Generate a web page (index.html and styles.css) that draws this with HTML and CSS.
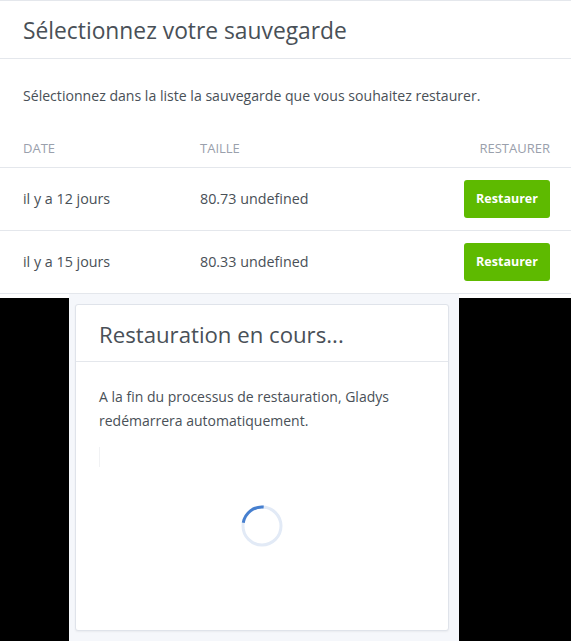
FILE: index.html
```html
<!DOCTYPE html>
<html lang="fr">
<head>
<meta charset="utf-8">
<title>Restauration</title>
<link rel="stylesheet" href="styles.css">
</head>
<body>
<div class="page">
  <section class="card top-card">
    <div class="card-header">
      <h3 class="card-title title-main">Sélectionnez votre sauvegarde</h3>
    </div>
    <div class="card-body">
      <p class="lead-text">Sélectionnez dans la liste la sauvegarde que vous souhaitez restaurer.</p>
    </div>
    <table class="backup-table">
      <colgroup>
        <col class="col-date">
        <col class="col-size">
        <col class="col-action">
      </colgroup>
      <thead>
        <tr>
          <th class="cell-date">Date</th>
          <th class="cell-size">Taille</th>
          <th class="cell-action">Restaurer</th>
        </tr>
      </thead>
      <tbody>
        <tr>
          <td class="cell-date">il y a 12 jours</td>
          <td class="cell-size">80.73 undefined</td>
          <td class="cell-action"><button class="btn-success">Restaurer</button></td>
        </tr>
        <tr>
          <td class="cell-date">il y a 15 jours</td>
          <td class="cell-size">80.33 undefined</td>
          <td class="cell-action"><button class="btn-success">Restaurer</button></td>
        </tr>
      </tbody>
    </table>
  </section>

  <section class="overlay">
    <div class="side side-left"></div>
    <div class="backdrop">
      <div class="card modal-card">
        <div class="card-header modal-header">
          <h3 class="card-title title-modal">Restauration en cours...</h3>
        </div>
        <div class="modal-body">
          <p class="modal-text">A la fin du processus de restauration, Gladys redémarrera automatiquement.</p>
          <div class="faint-rule"></div>
          <div class="spinner-wrap">
            <svg class="spinner" width="44" height="44" viewBox="0 0 44 44" aria-hidden="true">
              <circle cx="22" cy="22" r="19" fill="none" stroke="#e2eaf6" stroke-width="3"/>
              <path d="M3.29 18.7 A19 19 0 0 1 23.66 3.07" fill="none" stroke="#467fcf" stroke-width="3"/>
            </svg>
          </div>
        </div>
      </div>
    </div>
    <div class="side side-right"></div>
  </section>
</div>
</body>
</html>
```

FILE: styles.css
```css
* { box-sizing: border-box; }

html, body {
  margin: 0;
  padding: 0;
  background: #ffffff;
  overflow: hidden;
}

body {
  font-family: "Open Sans", "Noto Sans", sans-serif;
  font-size: 14px;
  color: #495057;
  width: 571px;
  height: 641px;
}

.page {
  display: flex;
  flex-direction: column;
  height: 641px;
}

.card {
  background: #fff;
}

.top-card {
  border-top: 1px solid #e4e7ec;
  height: 294px;
  flex: none;
  overflow: hidden;
}

.card-header {
  height: 58px;
  border-bottom: 1px solid #e4e7ec;
  display: flex;
  align-items: center;
  padding: 3px 23px 0;
}

.card-title {
  margin: 0;
  font-weight: 400;
  line-height: 28px;
  color: #495057;
}

.title-main { font-size: 22.8px; }
.title-modal { font-size: 22.2px; }

.card-body {
  padding: 26px 23px 24px;
}

.lead-text {
  margin: 0;
  font-size: 14.1px;
  line-height: 22px;
}

.backup-table {
  width: 100%;
  border-collapse: collapse;
  table-layout: fixed;
}

.col-date { width: 200px; }
.col-action { width: 140px; }

.backup-table th {
  font-size: 13px;
  font-weight: 400;
  text-transform: uppercase;
  color: #9aa0ac;
  line-height: 18px;
  height: 36px;
  padding: 0 0 2px;
  text-align: left;
  vertical-align: middle;
  border-bottom: 1px solid #e4e7ec;
}

.backup-table td {
  padding: 0;
  height: 63px;
  line-height: 20px;
  border-bottom: 1px solid #e4e7ec;
  vertical-align: middle;
  font-size: 14.3px;
}

.backup-table .cell-date { padding-left: 23px; }
.backup-table .cell-action { text-align: right; padding-right: 21px; }

.btn-success {
  display: inline-block;
  width: 86px;
  height: 38px;
  border: none;
  border-radius: 3px;
  background: #5eba00;
  color: #fff;
  font-family: "Open Sans", "Noto Sans", sans-serif;
  font-size: 12.5px;
  font-weight: 700;
  padding: 0;
  vertical-align: middle;
}

.overlay {
  flex: 1;
  display: flex;
  background: #fff;
}

.side {
  background: #000;
  margin-top: 4px;
}

.side-left { width: 69px; }
.side-right { flex: 1; }

.backdrop {
  width: 390px;
  background: #f5f7fb;
  padding: 10px 10px 0 6px;
}

.modal-card {
  height: 327px;
  border: 1px solid #dfe3ea;
  border-radius: 3px;
  box-shadow: 0 1px 2px rgba(0, 0, 0, 0.05);
  display: flex;
  flex-direction: column;
}

.modal-header {
  height: 57px;
  flex: none;
}

.modal-body {
  padding: 23px 23px 0;
}

.modal-text {
  margin: 0;
  line-height: 24px;
}

.faint-rule {
  margin-top: 14px;
  width: 1px;
  height: 20px;
  background: #f1f2f4;
}

.spinner-wrap {
  display: flex;
  justify-content: center;
  margin-top: 37px;
}

.spinner { display: block; }
```
